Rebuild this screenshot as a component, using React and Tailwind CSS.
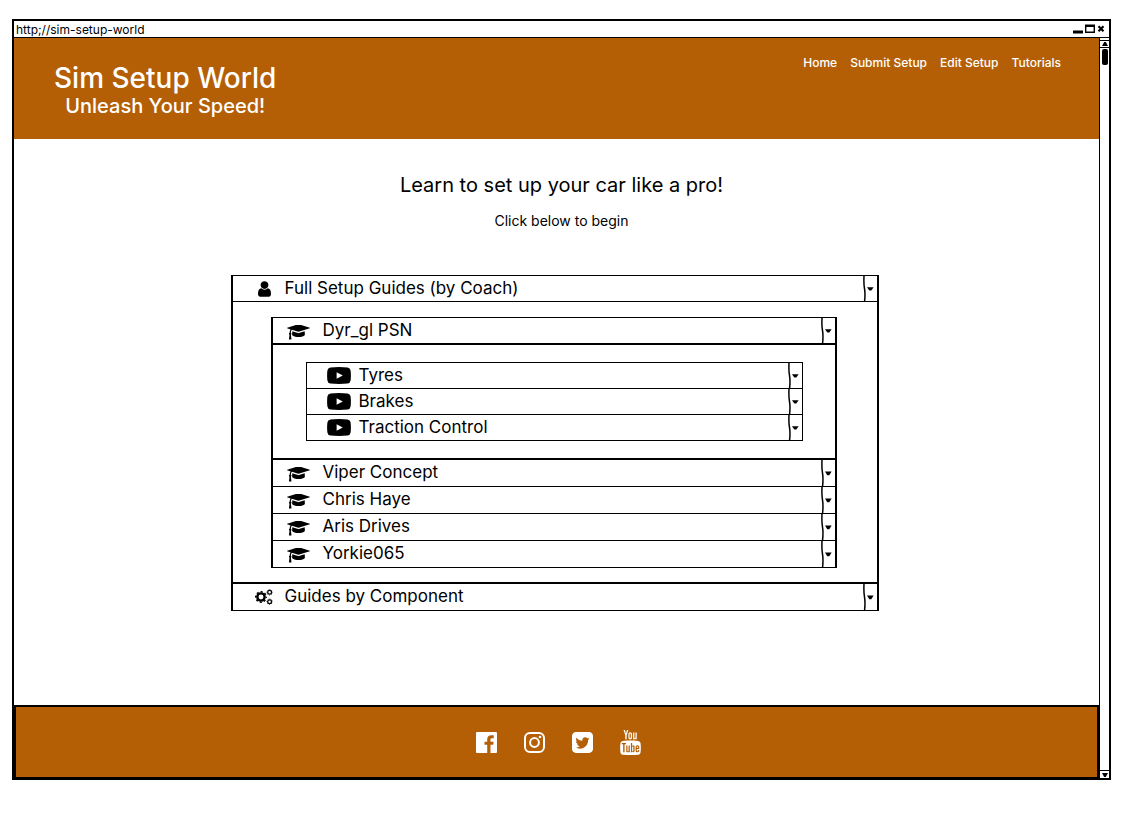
import React from 'react';
import { TfiYoutube } from 'react-icons/tfi';

function UserIcon() {
  return (
    <svg viewBox="256 128 1280 1536" className="h-4 w-[13px]" fill="currentColor" aria-hidden="true">
      <path d="M1536 1399q0 109-62.5 187t-150.5 78h-854q-88 0-150.5-78t-62.5-187q0-85 8.5-160.5t31.5-152 58.5-131 94-89 134.5-34.5q131 128 313 128t313-128q76 0 134.5 34.5t94 89 58.5 131 31.5 152 8.5 160.5zm-256-887q0 159-112.5 271.5t-271.5 112.5-271.5-112.5-112.5-271.5 112.5-271.5 271.5-112.5 271.5 112.5 112.5 271.5z" />
    </svg>
  );
}

function CapIcon() {
  return (
    <svg viewBox="0 256 2304 1408" className="h-[15px] w-[23px]" fill="currentColor" aria-hidden="true">
      <path d="M1774 836l18 316q4 69-82 128t-235 93.5-323 34.5-323-34.5-235-93.5-82-128l18-316 574 181q22 7 48 7t48-7zm530-324q0 23-22 31l-1120 352q-4 1-10 1t-10-1l-652-206q-43 34-71 111.5t-34 178.5q63 36 63 109 0 69-58 107l58 433q2 14-8 25-9 11-24 11h-192q-15 0-24-11-10-11-8-25l58-433q-58-38-58-107 0-73 65-111 11-207 98-330l-333-104q-22-8-22-31t22-31l1120-352q4-1 10-1t10 1l1120 352q22 8 22 31z" />
    </svg>
  );
}

function Gear({ x, y, r }) {
  return (
    <g fill="none" stroke="currentColor">
      <circle cx={x} cy={y} r={r * 0.61} strokeWidth={r * 0.4} />
      <circle cx={x} cy={y} r={r * 0.88} strokeWidth={r * 0.24} pathLength="16" strokeDasharray="1 1" strokeDashoffset="0.5" />
    </g>
  );
}

function CogsIcon() {
  return (
    <svg viewBox="0 64 1920 1664" className="h-4 w-[18px]" aria-hidden="true">
      <Gear x={640} y={896} r={640} />
      <Gear x={1560} y={400} r={330} />
      <Gear x={1560} y={1392} r={330} />
    </svg>
  );
}

function PlayIcon() {
  return (
    <svg viewBox="0 0 24 17" className="h-[17px] w-6" aria-hidden="true">
      <path d="M3.5.4Q12-.3 20.500.4 23.300.8 23.600 3.400 24.200 8.500 23.600 13.600 23.300 16.200 20.500 16.600 12 17.300 3.500 16.600.7 16.200.4 13.600-.2 8.500.4 3.400.7.8 3.500.4Z" fill="currentColor" />
      <path d="M9.600 5.300v6.400l6.200-3.200z" fill="white" />
    </svg>
  );
}

function FacebookIcon() {
  return (
    <svg viewBox="128 128 1536 1536" className="size-[21px]" fill="currentColor" aria-hidden="true">
      <path d="M1579 128q35 0 60 25t25 60v1366q0 35-25 60t-60 25h-391v-595h199l30-232h-229v-148q0-56 23.5-84t91.5-28l122-1v-207q-63-9-178-9-136 0-217.5 80t-81.5 226v171h-200v232h200v595h-735q-35 0-60-25t-25-60v-1366q0-35 25-60t60-25h1366z" />
    </svg>
  );
}

function InstagramIcon() {
  return (
    <svg viewBox="0 0 21 21" className="size-[21px]" fill="none" stroke="currentColor" strokeWidth="2" aria-hidden="true">
      <rect x="1" y="1" width="19" height="19" rx="5" />
      <circle cx="10.5" cy="10.5" r="4.400" />
      <circle cx="16" cy="5" r="1.300" fill="currentColor" stroke="none" />
    </svg>
  );
}

function TwitterIcon() {
  return (
    <svg viewBox="128 128 1536 1536" className="size-[21px]" fill="currentColor" aria-hidden="true">
      <path d="M1408 610q-56 25-121 34 68-40 93-117-65 38-134 51-61-66-153-66-87 0-148.5 61.5t-61.5 148.5q0 29 5 48-129-7-242-65t-192-155q-29 50-29 106 0 114 91 175-47-1-100-26v2q0 75 50 133.5t123 72.5q-29 8-51 8-13 0-39-4 21 63 74.5 104t121.5 42q-116 90-261 90-26 0-50-3 148 94 322 94 112 0 210-35.5t168-95 120.5-137 75-162 24.5-168.5q0-18-1-27 63-45 105-109zm256-194v960q0 119-84.5 203.5t-203.5 84.5h-960q-119 0-203.5-84.5t-84.5-203.5v-960q0-119 84.5-203.5t203.5-84.5h960q119 0 203.5 84.5t84.5 203.5z" />
    </svg>
  );
}

function DropMark() {
  return (
    <svg viewBox="0 0 14 26" preserveAspectRatio="none" className="w-[14px] self-stretch" aria-hidden="true">
      <path d="M1 0Q.6 8 1.500 13T1.600 26" fill="none" stroke="currentColor" strokeWidth="1.500" />
      <path d="M4 11.600h6.600l-2.300 3.600h-2z" fill="currentColor" />
    </svg>
  );
}

function Row({ icon, label, open = false, className }) {
  return (
    <button
      type="button"
      aria-expanded={open}
      className={'flex w-full items-center border-black text-left text-[17px] leading-6 ' + className}
    >
      {icon}
      <span className="flex-1 pb-[2px]">{label}</span>
      <DropMark />
    </button>
  );
}

const coaches = ['Viper Concept', 'Chris Haye', 'Aris Drives', 'Yorkie065'];
const topics = ['Tyres', 'Brakes', 'Traction Control'];

function CoachRow({ name, open }) {
  return (
    <Row
      open={open}
      className={open ? 'h-[27px] border-b-2 pl-[14px]' : 'h-[27px] border-b pl-[14px]'}
      icon={<span className="flex w-9 pt-[3px]"><CapIcon /></span>}
      label={name}
    />
  );
}

function Guides() {
  return (
    <section className="mr-1 w-full max-w-[648px] border-x-2 border-t border-black" aria-label="Guides">
      <Row open className="h-[26px] border-b pl-[25px]" icon={<span className="flex w-[27px]"><UserIcon /></span>} label="Full Setup Guides (by Coach)" />
      <div className="border-b-2 border-black pt-[15px] pr-10 pb-[14px] pl-[38px]">
        <div className="border-x-2 border-t border-black">
          <CoachRow name="Dyr_gl PSN" open />
          <div className="border-b-2 border-black pt-[17px] pr-8 pb-[17px] pl-[33px]">
            <div className="border-x border-t border-black">
              {topics.map((topic) => (
                <Row
                  key={topic}
                  className="h-[26px] border-b pl-5"
                  icon={<span className="flex w-8"><PlayIcon /></span>}
                  label={topic}
                />
              ))}
            </div>
          </div>
          {coaches.map((name) => <CoachRow key={name} name={name} />)}
        </div>
      </div>
      <Row className="h-[27px] border-b pl-[22px]" icon={<span className="flex w-[30px]"><CogsIcon /></span>} label="Guides by Component" />
    </section>
  );
}

function TitleBar() {
  return (
    <div className="flex h-[17px] items-center justify-between border-b border-black pr-1 pl-[2px]">
      <span className="pt-px text-xs leading-4">http;//sim-setup-world</span>
      <div className="flex items-center gap-[2px]">
        <button type="button" aria-label="Minimize">
          <svg viewBox="0 0 10 10" className="size-[10px]" aria-hidden="true"><path d="M0 6.500h10v3H0z" /></svg>
        </button>
        <button type="button" aria-label="Maximize">
          <svg viewBox="0 0 10 10" className="size-[10px]" aria-hidden="true"><path d="M.7 1.800h8.600v6.500H.7z" fill="none" stroke="black" strokeWidth="1.400" /><path d="M0 .5h10v2.500H0z" /></svg>
        </button>
        <button type="button" aria-label="Close">
          <svg viewBox="0 0 8 10" className="h-[10px] w-2" aria-hidden="true"><path d="M1.500 2.300l5 5m0-5l-5 5" stroke="black" strokeWidth="2.200" /></svg>
        </button>
      </div>
    </div>
  );
}

function ScrollRail() {
  return (
    <div className="flex w-[10px] flex-col items-center border-l border-black">
      <button type="button" aria-label="Scroll up" className="mt-[2px] flex h-2 w-full items-center justify-center border-y border-black">
        <svg viewBox="0 0 6 4" className="h-1 w-[6px]" aria-hidden="true"><path d="M2.200 0h1.600L6 4H0z" /></svg>
      </button>
      <div className="mt-px h-4 w-[6px] rounded-[2px] bg-black" />
      <div className="flex-1" />
      <button type="button" aria-label="Scroll down" className="flex h-2 w-full items-center justify-center border-t border-black">
        <svg viewBox="0 0 6 4" className="h-1 w-[6px]" aria-hidden="true"><path d="M2.200 4h1.600L6 0H0z" /></svg>
      </button>
    </div>
  );
}

const links = ['Home', 'Submit Setup', 'Edit Setup', 'Tutorials'];
const socials = [
  { name: 'Facebook', icon: <FacebookIcon /> },
  { name: 'Instagram', icon: <InstagramIcon /> },
  { name: 'Twitter', icon: <TwitterIcon /> },
  { name: 'YouTube', icon: <TfiYoutube viewBox="1.5 0 14 17" className="h-[25px] w-[21px]" aria-hidden="true" /> },
];

export default function App() {
  return (
    <div className="min-h-screen bg-white pt-[19px] pr-[22px] pb-9 pl-3 font-['Inter','Liberation_Sans',sans-serif] text-black">
      <div className="border-2 border-black">
        <TitleBar />
        <div className="flex">
          <div className="min-w-0 flex-1">
            <header className="flex items-start justify-between bg-[#b45f06] pt-[17px] pr-[38px] pb-[23px] pl-10 text-white">
              <div className="pt-[5px] text-center">
                <h1 className="text-[28px] leading-9 font-medium">Sim Setup World</h1>
                <p className="text-xl leading-5 font-medium">Unleash Your Speed!</p>
              </div>
              <nav className="flex gap-[13px] text-xs leading-4 font-medium">
                {links.map((link) => <a key={link} href="#">{link}</a>)}
              </nav>
            </header>
            <main className="flex flex-col items-center pt-8 pb-[94px]">
              <h2 className="pl-[10px] text-xl leading-7">Learn to set up your car like a pro!</h2>
              <p className="mt-3 mb-11 pl-[10px] text-sm leading-5">Click below to begin</p>
              <Guides />
            </main>
            <footer className="flex h-[73px] items-center justify-center gap-[27px] border-2 border-b border-black bg-[#b45f06] pl-1 text-white">
              {socials.map(({ name, icon }) => (
                <a key={name} href="#" aria-label={name}>{icon}</a>
              ))}
            </footer>
          </div>
          <ScrollRail />
        </div>
      </div>
    </div>
  );
}
